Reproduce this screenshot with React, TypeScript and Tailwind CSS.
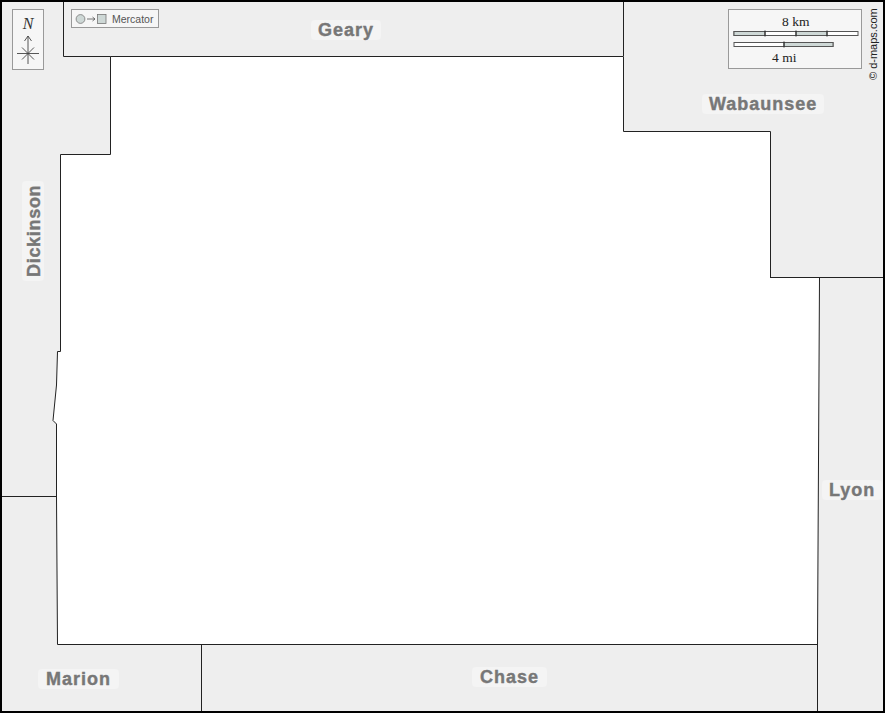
const labelClass =
  "absolute rounded-[4px] bg-[#f4f4f4] font-['Liberation_Sans',Arial,sans-serif] text-[18px] leading-[19px] font-bold text-[#777777] whitespace-nowrap [-webkit-text-stroke:0.4px_#777777]";

function MapLines() {
  return (
    <svg width="885" height="713" viewBox="0 0 885 713" className="absolute inset-0">
      <polygon
        points="110.5,56.5 623.5,56.5 623.5,131.5 770.5,131.5 770.5,277.5 819.5,277.5 817.5,644.5 57.5,644.5 56.5,496.5 56.5,424 53,420.5 56.5,385 57.5,351.5 60.5,351.5 60.5,154.5 110.5,154.5"
        fill="#ffffff"
        stroke="#222222"
        strokeWidth="1"
      />
      <polyline points="63.5,0 63.5,56.5 110.5,56.5" fill="none" stroke="#222222" />
      <line x1="623.5" y1="0" x2="623.5" y2="56" stroke="#222222" />
      <line x1="770" y1="277.5" x2="885" y2="277.5" stroke="#222222" />
      <line x1="0" y1="496.5" x2="57" y2="496.5" stroke="#222222" />
      <line x1="201.5" y1="644" x2="201.5" y2="713" stroke="#222222" />
      <line x1="817.5" y1="644" x2="817.5" y2="713" stroke="#222222" />
    </svg>
  );
}

function NorthArrow() {
  return (
    <div className="absolute left-[12px] top-[9px] h-[61px] w-[32px] border border-[#999999] bg-[#f6f6f6]">
      <div className="pt-[5px] text-center font-['Liberation_Serif',serif] text-[16px] leading-[18px] italic text-[#333333]">
        N
      </div>
      <svg width="30" height="36" viewBox="0 0 30 36" className="absolute left-0 top-[24px]">
        <path d="M15 2V30M11.5 7L15 2L18.5 7" fill="none" stroke="#444444" strokeWidth="0.9" />
        <path d="M4 19.5H26M9 13.5L21 25.5M21 13.5L9 25.5" fill="none" stroke="#444444" strokeWidth="0.9" />
      </svg>
    </div>
  );
}

function ProjectionBadge() {
  return (
    <div className="absolute left-[71px] top-[9px] flex h-[19px] w-[88px] items-center border border-[#999999] bg-[#f6f6f6] pl-[3px]">
      <svg width="32" height="12" viewBox="0 0 32 12" className="shrink-0">
        <circle cx="5.5" cy="6" r="4.4" fill="#ced8d6" stroke="#777777" strokeWidth="0.8" />
        <path d="M12 6H20M17.5 4L20 6L17.5 8" fill="none" stroke="#555555" strokeWidth="0.8" />
        <rect x="22.5" y="1.5" width="8.5" height="9" fill="#ced8d6" stroke="#777777" strokeWidth="0.8" />
      </svg>
      <span className="ml-[5px] pt-[1px] font-['Liberation_Sans',Arial,sans-serif] text-[10.5px] leading-none text-[#555555]">
        Mercator
      </span>
    </div>
  );
}

function ScaleBox() {
  return (
    <div className="absolute left-[728px] top-[9px] h-[60px] w-[134px] border border-[#999999] bg-[#f6f6f6] font-['Liberation_Serif',serif] text-[13.5px] leading-none text-[#222222]">
      <div className="absolute left-[53px] top-[5px]">8 km</div>
      <svg width="132" height="30" viewBox="0 0 132 30" className="absolute left-0 top-[20px]">
        <rect x="5" y="1.5" width="124" height="4" fill="#ffffff" stroke="#555555" />
        <rect x="5" y="1.5" width="31" height="4" fill="#ced8d6" stroke="#555555" />
        <rect x="67" y="1.5" width="31" height="4" fill="#ced8d6" stroke="#555555" />
        <rect x="5" y="12.5" width="99" height="4" fill="#ffffff" stroke="#555555" />
        <rect x="55" y="12.5" width="49" height="4" fill="#ced8d6" stroke="#555555" />
        <path d="M36 0.5V6.5M67 0.5V6.5M98 0.5V6.5M55 11.5V17.5" stroke="#222222" />
      </svg>
      <div className="absolute left-[43px] top-[41px]">4 mi</div>
    </div>
  );
}

export default function App() {
  return (
    <div className="relative h-[713px] w-[885px] overflow-hidden bg-[#eeeeee]">
      <MapLines />
      <NorthArrow />
      <ProjectionBadge />
      <ScaleBox />

      <div className="absolute left-[867px] top-[80px] origin-top-left -rotate-90 font-['Liberation_Sans',Arial,sans-serif] text-[11px] leading-[13px] whitespace-nowrap text-[#222222]">
        © d-maps.com
      </div>

      {/* county names sit on the map like pins */}
      <div className={`${labelClass} left-[311px] top-[20px] h-[20px] px-[7px] pt-[1px] tracking-[1px]`}>Geary</div>
      <div className={`${labelClass} left-[702px] top-[94px] h-[20px] px-[7px] pt-[1px] tracking-[1px]`}>Wabaunsee</div>
      <div className={`${labelClass} left-[822px] top-[480px] h-[20px] px-[7px] pt-[1px] tracking-[1px]`}>Lyon</div>
      <div className={`${labelClass} left-[38px] top-[669px] h-[20px] px-[8px] pt-[1px] tracking-[1px]`}>Marion</div>
      <div className={`${labelClass} left-[472px] top-[667px] h-[20px] px-[8px] pt-[1px] tracking-[1px]`}>Chase</div>
      <div className={`${labelClass} left-[22px] top-[281px] h-[22px] origin-top-left -rotate-90 px-[4px] pt-[3px] tracking-[0.7px]`}>
        Dickinson
      </div>

      <div className="pointer-events-none absolute inset-0 border-2 border-black" />
    </div>
  );
}
